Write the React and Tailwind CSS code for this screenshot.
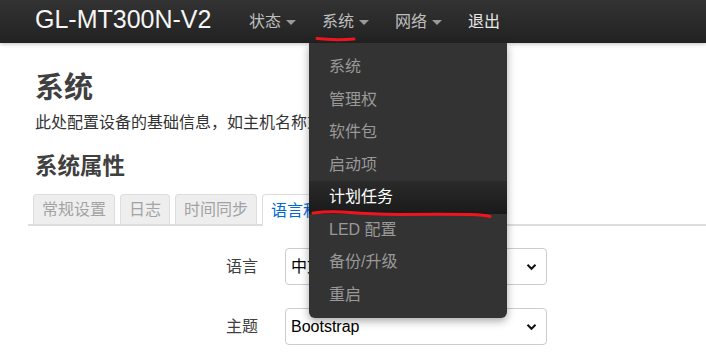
import React from "react";

const NavItem = ({ label, caret = true, open = false, children, color = "text-[#bfbfbf]" }) => (
  <li className="relative h-[43px] flex items-center px-[13px]">
    <span className={`text-[16px] ${color}`}>{label}</span>
    {caret && (
      <span className="ml-[5px] mt-[1px] w-0 h-0 border-t-[5px] border-t-[#9a9a9a] border-x-[5px] border-x-transparent" />
    )}
    {open && children}
  </li>
);

const menuItems = ["系统", "管理权", "软件包", "启动项", "计划任务", "LED 配置", "备份/升级", "重启"];

const DropMenu = () => (
  <div className="absolute left-0 top-[43px] z-20 w-[198px] h-[275px] pt-[8px] bg-[#333] rounded-b-[6px] shadow-[0_3px_8px_rgba(0,0,0,0.35)]">
    {menuItems.map((item) => {
      const active = item === "计划任务";
      return (
        <div
          key={item}
          className={
            active
              ? "h-[32.5px] flex items-center px-[20px] text-[16px] text-white bg-gradient-to-b from-[#2a2a2a] to-[#1a1a1a]"
              : "h-[32.5px] flex items-center px-[20px] text-[16px] text-[#999]"
          }
        >
          {item}
        </div>
      );
    })}
  </div>
);

const Tab = ({ label, active }) =>
  active ? (
    <li className="h-[32px] -mb-[2px] px-[8px] mr-[5px] bg-white border border-b-0 border-[#ddd] rounded-t-[4px] flex items-center text-[16px] text-[#0069d6]">
      {label}
    </li>
  ) : (
    <li className="h-[30px] px-[8px] mr-[5px] bg-[#eee] border border-[#ddd] border-b-0 rounded-t-[4px] flex items-center text-[16px] text-[#a3a3a3]">
      {label}
    </li>
  );

const SelectRow = ({ label, value, className }) => (
  <div className={`flex items-center ${className}`}>
    <label className="w-[230px] text-right text-[16px] text-[#404040]">{label}</label>
    <div className="ml-[27px] w-[262px] h-[37px] border border-[#ccc] rounded-[4px] bg-white flex items-center justify-between pl-[5px] pr-[9px]">
      <span className="text-[16px] text-black font-['Liberation_Sans','Noto_Sans_CJK_SC',sans-serif]">{value}</span>
      <svg width="11" height="8" viewBox="0 0 11 8">
        <path d="M1.5 1.8 L5.5 5.8 L9.5 1.8" fill="none" stroke="#111" strokeWidth="2" />
      </svg>
    </div>
  </div>
);

export default function App() {
  return (
    <div className="relative w-[706px] h-[353px] overflow-hidden bg-white font-['Liberation_Sans','Noto_Sans_CJK_SC',sans-serif]">
      <div className="relative z-10 h-[43px] bg-gradient-to-b from-[#333] to-[#222] shadow-[0_1px_4px_rgba(0,0,0,0.25)] flex items-center">
        <div className="pl-[35px] w-[236px] text-[25px] leading-none text-[#f5f5f5] -mt-[4px]">GL-MT300N-V2</div>
        <ul className="flex">
          <NavItem label="状态" />
          <NavItem label="系统" open>
            <DropMenu />
          </NavItem>
          <NavItem label="网络" />
          <NavItem label="退出" caret={false} color="text-[#e6e6e6]" />
        </ul>
      </div>

      <main className="pl-[28px]">
        <h1 className="ml-[7px] mt-[27px] h-[36px] leading-[36px] text-[29px] font-bold text-[#404040]">系统</h1>
        <p className="ml-[7px] mt-[6px] leading-[22px] text-[16px] text-[#333]">
          此处配置设备的基础信息，如主机名称或时区。
        </p>
        <h2 className="ml-[7px] mt-[18px] h-[30px] leading-[30px] text-[22.5px] font-bold text-[#404040]">系统属性</h2>
        <ul className="mt-[12px] flex items-end pl-[5px] border-b-2 border-[#ddd]">
          <Tab label="常规设置" />
          <Tab label="日志" />
          <Tab label="时间同步" />
          <Tab label="语言和界面" active />
        </ul>
        <SelectRow label="语言" value="中文 (Chinese)" className="mt-[22px]" />
        <SelectRow label="主题" value="Bootstrap" className="mt-[23px]" />
      </main>

      <svg className="absolute left-0 top-0 z-30 pointer-events-none" width="706" height="353">
        <path d="M317 38.5 Q335 40.5 354 39" fill="none" stroke="#f0141e" strokeWidth="3" strokeLinecap="round" />
        <path d="M313 213 Q330 211 350 212.5 Q370 214 400 214.5 Q440 214 470 214.5 Q485 215 490 216.5" fill="none" stroke="#f0141e" strokeWidth="3" strokeLinecap="round" />
      </svg>
    </div>
  );
}
